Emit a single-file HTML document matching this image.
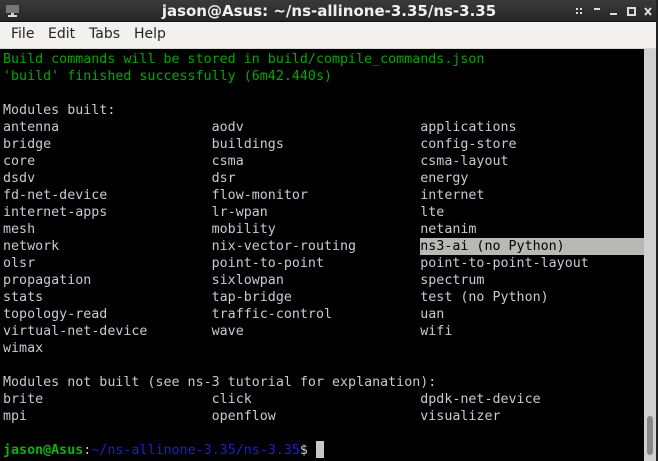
<!DOCTYPE html>
<html><head><meta charset="utf-8"><style>
*{margin:0;padding:0;box-sizing:border-box}
html,body{width:658px;height:461px;overflow:hidden;background:#000}
#title{position:absolute;left:0;top:0;width:658px;height:22px;background:linear-gradient(#3a3a3a,#262626);border-bottom:1px solid #111}
#title .t{position:absolute;left:0;width:658px;top:2px;text-align:center;color:#f0f0f0;font:bold 15px "DejaVu Sans","Liberation Sans",sans-serif;}
#menu{position:absolute;left:0;top:22px;width:658px;height:27px;background:#f2f1f0;border-bottom:1px solid #d8d6d3;font:14px "DejaVu Sans","Liberation Sans",sans-serif;color:#222}
#menu span{position:absolute;top:4px}
#term{position:absolute;left:0;top:49px;width:644px;height:412px;background:#000}
pre{position:absolute;left:3px;top:51px;font:13.33px "DejaVu Sans Mono","Liberation Mono",monospace;line-height:17px;color:#c4cbd2;white-space:pre}
.g{color:#00a800}
.hl{background:#b8b8b4;color:#000;display:inline-block;width:224px}
.pg{color:#10b010;font-weight:bold}
.pb{color:#2020c0}
#sb{position:absolute;left:644px;top:49px;width:12px;height:412px;background:#d0d0d0}
#thumb{position:absolute;left:647px;top:416px;width:6px;height:39px;background:#888;border-radius:3px}
#rb{position:absolute;left:656px;top:0;width:2px;height:461px;background:#222}
#cur{position:absolute;left:316px;top:441px;width:8px;height:17px;background:#c8c8c8}
</style></head><body>
<div id="title">
<svg style="position:absolute;left:6px;top:4px" width="14" height="14"><rect x="0" y="1" width="13" height="8" fill="#777"/><rect x="5" y="9" width="3" height="2" fill="#ccc"/><rect x="2" y="11" width="9" height="2" fill="#ddd"/></svg>
<div class="t">jason@Asus: ~/ns-allinone-3.35/ns-3.35</div>
<svg style="position:absolute;left:574px;top:7px" width="80" height="10" fill="#ddd">
<rect x="2" y="1" width="2" height="2"/><rect x="6" y="1" width="2" height="2"/><rect x="2" y="5" width="2" height="2"/><rect x="6" y="5" width="2" height="2"/>
<rect x="20" y="1" width="6" height="2"/>
<rect x="36" y="6" width="7" height="2"/>
<rect x="54" y="1" width="7" height="7" fill="none" stroke="#ddd" stroke-width="2"/>
<path d="M71 1L77 8M77 1L71 8" stroke="#ddd" stroke-width="2"/>
</svg>
</div>
<div id="menu"><span style="left:11px">File</span><span style="left:48px">Edit</span><span style="left:89px">Tabs</span><span style="left:134px">Help</span></div>
<div id="term"></div>
<pre><span class="g">Build commands will be stored in build/compile_commands.json
'build' finished successfully (6m42.440s)</span>

Modules built:
antenna                   aodv                      applications
bridge                    buildings                 config-store
core                      csma                      csma-layout
dsdv                      dsr                       energy
fd-net-device             flow-monitor              internet
internet-apps             lr-wpan                   lte
mesh                      mobility                  netanim
network                   nix-vector-routing        <span class="hl">ns3-ai (no Python)</span>
olsr                      point-to-point            point-to-point-layout
propagation               sixlowpan                 spectrum
stats                     tap-bridge                test (no Python)
topology-read             traffic-control           uan
virtual-net-device        wave                      wifi
wimax

Modules not built (see ns-3 tutorial for explanation):
brite                     click                     dpdk-net-device
mpi                       openflow                  visualizer

<span class="pg">jason@Asus</span>:<span class="pb">~/ns-allinone-3.35/ns-3.35</span>$ </pre>
<div id="cur"></div>
<div id="sb"></div><div id="thumb"></div><div id="rb"></div>
</body></html>
